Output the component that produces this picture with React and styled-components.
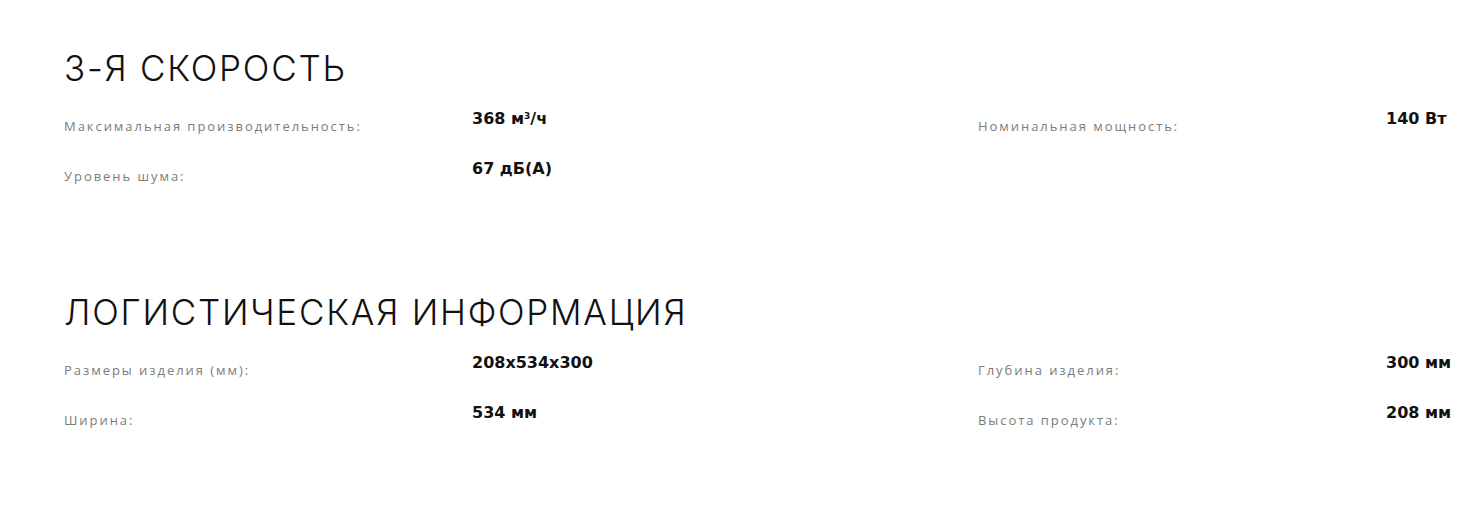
import React from 'react';
import styled, { createGlobalStyle } from 'styled-components';

const GlobalStyle = createGlobalStyle`
  body {
    margin: 0;
    background: #fff;
    font-family: "Open Sans", "Liberation Sans", sans-serif;
  }
`;

const sections = [
  {
    title: '3-Я СКОРОСТЬ',
    rows: [
      [
        { label: 'Максимальная производительность:', value: <>368 м<sup>3</sup>/ч</> },
        { label: 'Номинальная мощность:', value: '140 Вт' },
      ],
      [{ label: 'Уровень шума:', value: '67 дБ(А)' }],
    ],
  },
  {
    title: 'ЛОГИСТИЧЕСКАЯ ИНФОРМАЦИЯ',
    rows: [
      [
        { label: 'Размеры изделия (мм):', value: '208x534x300' },
        { label: 'Глубина изделия:', value: '300 мм' },
      ],
      [
        { label: 'Ширина:', value: '534 мм' },
        { label: 'Высота продукта:', value: '208 мм' },
      ],
    ],
  },
];

const App = () => (
  <>
    <GlobalStyle />
    <Page>
      {sections.map((s) => (
        <Section key={s.title}>
          <Title>{s.title}</Title>
          <Specs>
            {s.rows.map((row, i) => (
              <Row key={i}>
                {row.map((item) => (
                  <Pair key={item.label}>
                    <Label>{item.label}</Label>
                    <Value>{item.value}</Value>
                  </Pair>
                ))}
              </Row>
            ))}
          </Specs>
        </Section>
      ))}
    </Page>
  </>
);

export default App;

const Page = styled.div`
  padding: 0 0 0 64px;
`;

const Section = styled.section`
  padding-top: 48px;
  height: 244px;
  box-sizing: border-box;
`;

const Title = styled.h2`
  margin: 0;
  font-family: Inter, "Open Sans", sans-serif;
  font-weight: 300;
  font-size: 35px;
  line-height: 40px;
  letter-spacing: 1.75px;
  color: #111;
`;

const Specs = styled.div`
  margin-top: 21px;
  display: flex;
  flex-direction: column;
`;

const Row = styled.div`
  display: grid;
  grid-template-columns: 914px 1fr;
  height: 50px;
`;

const Pair = styled.div`
  display: grid;
  grid-template-columns: 408px 1fr;
  align-items: start;
`;

const Label = styled.span`
  padding-top: 8px;
  font-family: "Open Sans", sans-serif;
  font-size: 13px;
  line-height: 18px;
  letter-spacing: 1.95px;
  color: #7c7c7c;
`;

const Value = styled.span`
  font-family: "DejaVu Sans", Verdana, sans-serif;
  font-weight: 700;
  font-size: 16px;
  line-height: 20px;
  color: #111;
  white-space: nowrap;

  sup {
    font-size: 9px;
    vertical-align: 5px;
    line-height: 0;
  }
`;
